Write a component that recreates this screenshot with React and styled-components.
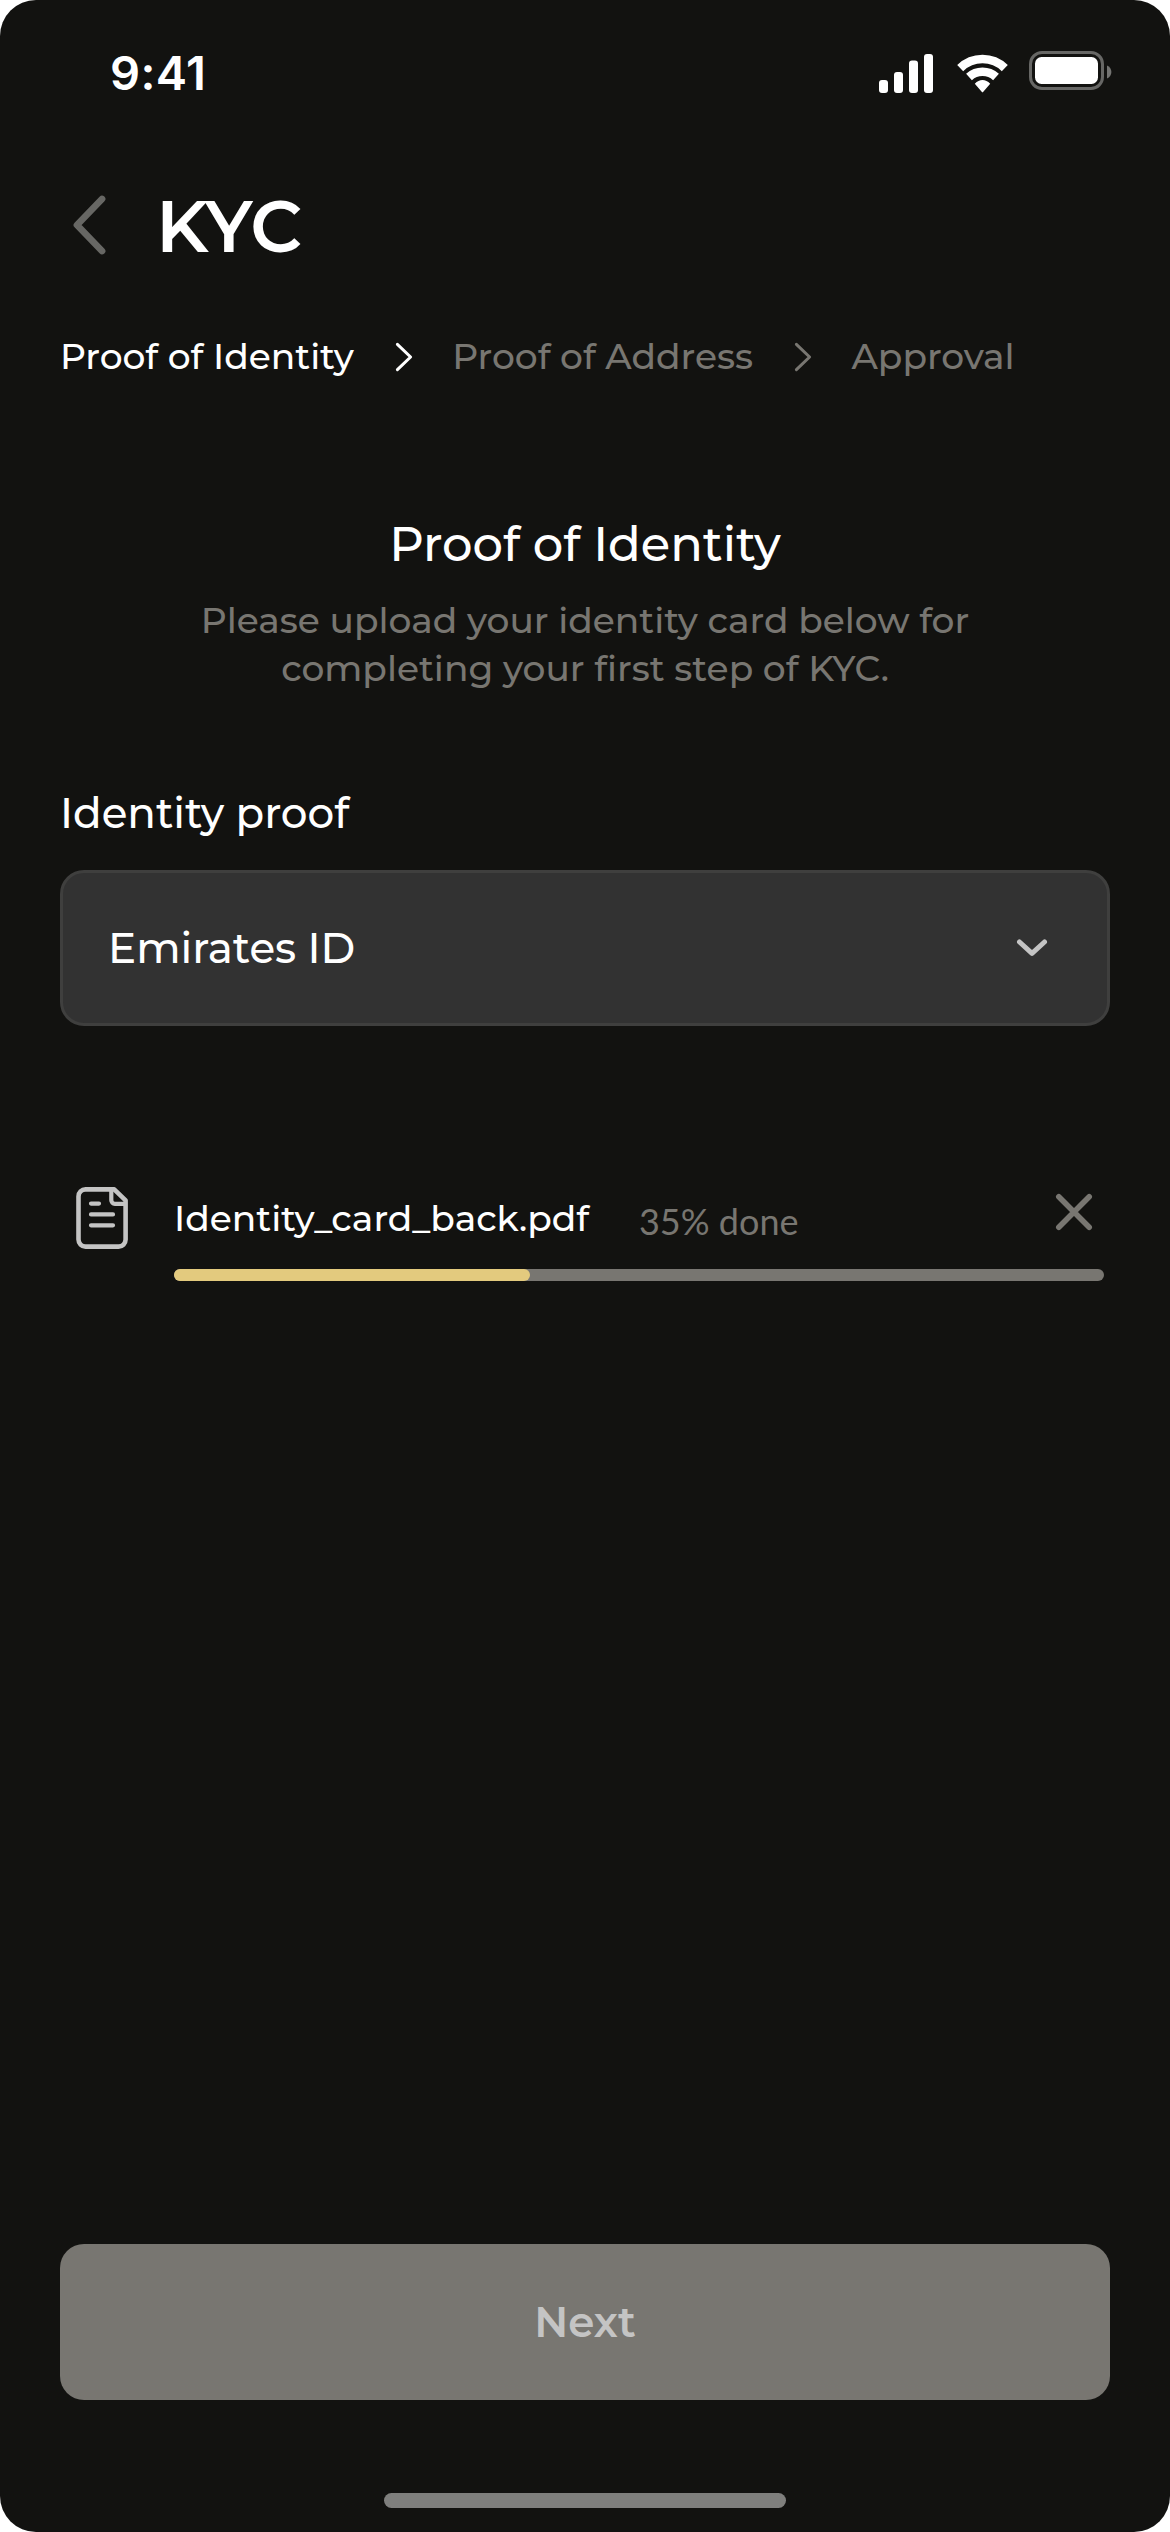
import React, { Component } from 'react';
import styled, { createGlobalStyle } from 'styled-components';

const steps = ['Proof of Identity', 'Proof of Address', 'Approval'];

export default class App extends Component {
  constructor(props) {
    super(props);
    this.state = {
      currentStep: 0,
      proofType: 'Emirates ID',
      file: { name: 'Identity_card_back.pdf', percent: 35, bar: 38.3 }
    };
  }

  render() {
    const { currentStep, proofType, file } = this.state;

    return (
      <Screen>
        <GlobalStyle />
        <StatusBar />
        <Header>
          <BackButton aria-label="Back">
            <svg width="36" height="66" viewBox="0 0 36 66" fill="none">
              <path
                d="M31 7L6 33L31 59"
                stroke="#676764"
                strokeWidth="6.8"
                strokeLinecap="round"
                strokeLinejoin="round"
              />
            </svg>
          </BackButton>
          <Title>KYC</Title>
        </Header>
        <Steps>
          {steps.map((step, i) => (
            <React.Fragment key={step}>
              {i > 0 && <StepArrow active={i - 1 === currentStep} />}
              <Step $active={i === currentStep}>{step}</Step>
            </React.Fragment>
          ))}
        </Steps>
        <Intro>
          <Heading>Proof of Identity</Heading>
          <Description>
            Please upload your identity card below for
            <br />
            completing your first step of KYC.
          </Description>
        </Intro>
        <Field>
          <Label>Identity proof</Label>
          <Select>
            <SelectValue>{proofType}</SelectValue>
            <svg width="36" height="24" viewBox="0 0 36 24" fill="none">
              <path
                d="M5.5 6L18 17.3L30.5 6"
                stroke="#c4c4c4"
                strokeWidth="5"
                strokeLinecap="round"
                strokeLinejoin="round"
              />
            </svg>
          </Select>
        </Field>
        <UploadRow>
          <FileIcon />
          <UploadBody>
            <UploadInfo>
              <FileName>{file.name}</FileName>
              <Percent>{file.percent}% done</Percent>
              <RemoveButton aria-label="Remove">
                <svg width="42" height="42" viewBox="0 0 42 42" fill="none">
                  <path
                    d="M5.8 5.8L36.2 36.2M36.2 5.8L5.8 36.2"
                    stroke="#787671"
                    strokeWidth="5.6"
                    strokeLinecap="round"
                  />
                </svg>
              </RemoveButton>
            </UploadInfo>
            <Track>
              <Progress style={{ width: `${file.bar}%` }} />
            </Track>
          </UploadBody>
        </UploadRow>
        <Footer>
          <NextButton disabled>Next</NextButton>
          <HomeIndicator />
        </Footer>
      </Screen>
    );
  }
}

const StatusBar = () => (
  <StatusWrapper>
    <Time>9:41</Time>
    <StatusIcons>
      <svg width="58" height="45" viewBox="0 0 58 45" fill="#fff">
        <rect x="0" y="29" width="9" height="13" rx="3" />
        <rect x="15" y="21" width="9" height="21" rx="3" />
        <rect x="30" y="9.5" width="9" height="32.5" rx="3" />
        <rect x="45" y="3" width="9" height="39" rx="3" />
      </svg>
      <svg width="52" height="45" viewBox="0 0 52 45" fill="none">
        <path d="M3.2 17.1A32 32 0 0 1 47.8 17.1" stroke="#fff" strokeWidth="8.6" />
        <path d="M12 26A20 20 0 0 1 39 26" stroke="#fff" strokeWidth="8.6" />
        <path d="M17.8 32.7Q21.4 29 25.5 29T33.2 32.7L26.3 40.8Q25.5 41.8 24.7 40.8Z" fill="#fff" />
      </svg>
      <svg width="83" height="45" viewBox="0 0 83 45" fill="none">
        <rect x="1.5" y="1.5" width="72" height="36" rx="11.5" stroke="#676765" strokeWidth="3" />
        <rect x="6" y="6" width="63" height="27" rx="6.5" fill="#fff" />
        <path d="M78 14.5V27.5C80.6 26.4 82.4 23.9 82.4 21S80.6 15.6 78 14.5Z" fill="#747472" />
      </svg>
    </StatusIcons>
  </StatusWrapper>
);

const StepArrow = ({ active }) => (
  <ArrowWrapper>
    <svg width="20" height="32" viewBox="0 0 20 32" fill="none">
      <path
        d="M3.4 3.4L16.6 16L3.4 28.6"
        stroke={active ? '#fff' : '#787671'}
        strokeWidth="3"
        strokeLinecap="round"
        strokeLinejoin="round"
      />
    </svg>
  </ArrowWrapper>
);

const FileIcon = () => (
  <FileIconWrapper>
    <svg width="54" height="66" viewBox="0 0 54 66" fill="none" stroke="#c4c4c4">
      <path
        d="M10.5 3.4H39.2L50.6 14.4V53.6A7 7 0 0 1 43.6 60.6H10.5A7 7 0 0 1 3.5 53.6V10.4A7 7 0 0 1 10.5 3.4Z"
        strokeWidth="4.6"
        strokeLinejoin="round"
      />
      <path d="M36.3 4V14.3A3.5 3.5 0 0 0 39.8 17.8H50" strokeWidth="4.2" />
      <path d="M16 17.6H24M16 28.4H38M16 39.3H38" strokeWidth="4.2" strokeLinecap="round" />
    </svg>
  </FileIconWrapper>
);

const GlobalStyle = createGlobalStyle`
  * {
    box-sizing: border-box;
  }

  body {
    margin: 0;
    background: #fff;
    font-family: Montserrat, Inter, sans-serif;
    -webkit-font-smoothing: antialiased;
  }

  button {
    border: 0;
    padding: 0;
    background: none;
    font-family: inherit;
  }

  svg {
    display: block;
    flex-shrink: 0;
  }
`;

const Screen = styled.main`
  display: flex;
  flex-direction: column;
  width: 1170px;
  height: 2532px;
  padding: 0 60px 24px;
  border-radius: 36px;
  background: #121210;
  color: #fff;
  font-weight: 500;
  overflow: hidden;
`;

const StatusWrapper = styled.div`
  display: flex;
  justify-content: space-between;
  height: 141px;
  padding: 51px 0 0 50px;
`;

const Time = styled.span`
  font-family: Inter, sans-serif;
  font-size: 47px;
  font-weight: 600;
  line-height: 44px;
  letter-spacing: 0.4px;
`;

const StatusIcons = styled.div`
  display: flex;
  gap: 20px;
  margin-right: -2px;
`;

const Header = styled.header`
  display: flex;
  align-items: center;
  height: 87px;
  margin-top: 42px;
  padding-left: 11px;
`;

const BackButton = styled.button`
  width: 36px;
  margin: 0 49px 4px 0;
`;

const Title = styled.h1`
  margin: 0;
  font-size: 72px;
  font-weight: 600;
  line-height: 87px;
`;

const Steps = styled.nav`
  display: flex;
  align-items: center;
  height: 45px;
  margin-top: 64px;
`;

const Step = styled.span`
  color: ${props => (props.$active ? '#fff' : '#787671')};
  font-size: 36px;
  line-height: 45px;
  white-space: nowrap;
`;

const ArrowWrapper = styled.span`
  margin: 0 38.5px 0 40px;
`;

const Intro = styled.section`
  margin-top: 136px;
  text-align: center;
`;

const Heading = styled.h2`
  margin: 0;
  font-size: 48px;
  font-weight: 500;
  line-height: 58px;
`;

const Description = styled.p`
  margin: 23px 0 0;
  color: #787671;
  font-size: 36px;
  line-height: 48px;
`;

const Field = styled.div`
  margin-top: 96px;
`;

const Label = styled.div`
  font-size: 42px;
  line-height: 50px;
`;

const Select = styled.div`
  display: flex;
  align-items: center;
  justify-content: space-between;
  height: 156px;
  margin-top: 32px;
  padding: 0 57px 0 45px;
  border: 3px solid #3f3f3e;
  border-radius: 24px;
  background: #323232;
`;

const SelectValue = styled.span`
  font-size: 42px;
  line-height: 50px;
`;

const UploadRow = styled.div`
  display: flex;
  margin-top: 159px;
  padding: 0 6px 0 15px;
`;

const FileIconWrapper = styled.div`
  width: 54px;
  margin: 1px 45px 0 0;
`;

const UploadBody = styled.div`
  flex: 1;
`;

const UploadInfo = styled.div`
  display: flex;
  align-items: center;
  height: 66px;
`;

const FileName = styled.span`
  font-size: 36px;
  line-height: 44px;
`;

const Percent = styled.span`
  margin: 5px 0 0 50px;
  color: #787671;
  font-family: Lato, sans-serif;
  font-size: 36px;
  font-weight: 400;
  line-height: 44px;
`;

const RemoveButton = styled.button`
  margin: 0 9px 12px auto;
`;

const Track = styled.div`
  height: 12px;
  margin-top: 18px;
  border-radius: 6px;
  background: #787671;
`;

const Progress = styled.div`
  height: 100%;
  border-radius: 6px;
  background: #e3ca7e;
`;

const Footer = styled.footer`
  display: flex;
  flex-direction: column;
  align-items: center;
  margin-top: auto;
`;

const NextButton = styled.button`
  width: 100%;
  height: 156px;
  border-radius: 24px;
  background: #787671;
  color: #c4c4c4;
  font-size: 42px;
  font-weight: 600;
`;

const HomeIndicator = styled.div`
  width: 402px;
  height: 15px;
  margin-top: 93px;
  border-radius: 8px;
  background: #7f7f7d;
`;
